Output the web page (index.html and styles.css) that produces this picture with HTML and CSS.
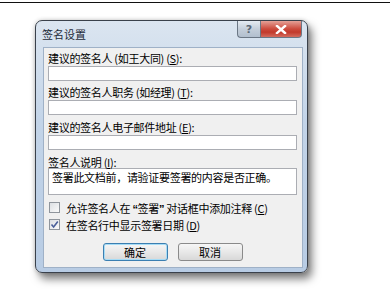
FILE: index.html
```html
<!DOCTYPE html>
<html lang="zh-CN">

<head>
    <meta charset="UTF-8">
    <meta name="viewport" content="width=device-width, initial-scale=1.0">
    <title>签名设置</title>
    <link rel="stylesheet" href="styles.css">
</head>

<body>
    <div class="top-rule"></div>

    <div class="dialog">
        <div class="title-bar">
            <span class="title">签名设置</span>
            <div class="title-buttons">
                <span class="btn-help">?</span>
                <span class="btn-close">
                    <svg width="12" height="9" viewBox="0 0 12 9">
                        <path d="M2 1 L10 8 M10 1 L2 8" stroke="#fff" stroke-width="2.4" stroke-linecap="square" />
                    </svg>
                </span>
            </div>
        </div>

        <div class="client">
            <div class="field">
                <label class="field-label">建议的签名人 (如王大同) (<u>S</u>):</label>
                <div class="input"></div>
            </div>
            <div class="field">
                <label class="field-label">建议的签名人职务 (如经理) (<u>T</u>):</label>
                <div class="input"></div>
            </div>
            <div class="field">
                <label class="field-label">建议的签名人电子邮件地址 (<u>E</u>):</label>
                <div class="input"></div>
            </div>
            <div class="field">
                <label class="field-label">签名人说明 (<u>I</u>):</label>
                <div class="textarea">签署此文档前，请验证要签署的内容是否正确。</div>
            </div>

            <div class="check-row first">
                <span class="checkbox"></span>
                <span>允许签名人在 <span class="quote">“</span>签署<span class="quote">”</span> 对话框中添加注释 (<u>C</u>)</span>
            </div>
            <div class="check-row">
                <span class="checkbox">
                    <svg width="9" height="9" viewBox="0 0 9 9">
                        <path d="M1.5 4.5 L3.6 7 L7.8 1.5" fill="none" stroke="#4a5f9a" stroke-width="1.6" />
                    </svg>
                </span>
                <span>在签名行中显示签署日期 (<u>D</u>)</span>
            </div>

            <div class="actions">
                <span class="button default">确定</span>
                <span class="button">取消</span>
            </div>
        </div>
    </div>
</body>

</html>
```

FILE: styles.css
```css
* {
    box-sizing: border-box;
    margin: 0;
    padding: 0;
}

body {
    font-family: 'Noto Sans CJK SC', 'Noto Sans', sans-serif;
    font-size: 11px;
    color: #000;
    background-color: #fff;
    width: 390px;
    height: 303px;
    overflow: hidden;
}

.top-rule {
    margin-top: 2px;
    height: 1px;
    background-color: #111;
}

.dialog {
    margin: 17px 0 0 35px;
    width: 273px;
    height: 253px;
    padding: 0 4px 4px 7px;
    border: 1px solid #3a414b;
    border-radius: 7px;
    background: linear-gradient(#dbe5f0, #c3d4e8 40%, #b8cce4);
    box-shadow: 4px 6px 8px rgba(0, 0, 0, 0.5), 0 0 4px rgba(0, 0, 0, 0.2);
}

.title-bar {
    display: flex;
    align-items: flex-start;
    height: 26px;
}

.title {
    margin: 5px 0 0 -1px;
    line-height: 16px;
    font-size: 11px;
    color: #1e2a38;
}

.title-buttons {
    display: flex;
    margin-left: auto;
    margin-right: 1px;
}

.btn-help,
.btn-close {
    display: flex;
    align-items: center;
    justify-content: center;
    height: 17px;
    border: 1px solid #6b7785;
    border-top: none;
}

.btn-help {
    width: 23px;
    border-radius: 0 0 0 4px;
    border-right: none;
    background: linear-gradient(#e5ebf2, #c4ceda 50%, #b2bfce);
    color: #5b6776;
    font-family: 'DejaVu Sans', sans-serif;
    font-size: 11px;
    font-weight: bold;
}

.btn-close {
    width: 42px;
    border-radius: 0 0 4px 0;
    background: linear-gradient(#e5a197, #cc4a3c 50%, #c23a2c 70%, #d46c5e);
}

.client {
    height: 221px;
    padding: 2px 5px 0 4px;
    border: 1px solid #9fb1c7;
    background-color: #f0f0f0;
    letter-spacing: -0.3px;
}

.field {
    margin-bottom: 3px;
}

.field + .field {
    margin-bottom: 4px;
}

.field-label {
    display: block;
    line-height: 16px;
}

.input {
    height: 15px;
    border: 1px solid #abadb3;
    background-color: #fff;
}

.textarea {
    height: 27px;
    margin-top: -2px;
    padding: 1px 3px;
    border: 1px solid #abadb3;
    background-color: #fff;
    line-height: 15px;
    white-space: nowrap;
}

.check-row {
    display: flex;
    align-items: center;
    gap: 6px;
    height: 17px;
    padding-left: 1px;
}

.check-row.first {
    margin-top: 4px;
}

.quote {
    font-family: 'Liberation Sans', sans-serif;
    font-weight: bold;
}

.checkbox {
    display: flex;
    align-items: center;
    justify-content: center;
    width: 11px;
    height: 11px;
    border: 1px solid #8f959c;
    background: linear-gradient(135deg, #dcdfe3, #fafafa);
}

.actions {
    display: flex;
    justify-content: center;
    gap: 10px;
    margin-top: 10px;
    letter-spacing: 0;
}

.button {
    display: flex;
    align-items: center;
    justify-content: center;
    width: 65px;
    height: 18px;
    border: 1px solid #8a8a8a;
    border-radius: 3px;
    background: linear-gradient(#f6f6f6, #e8e8e8 50%, #d8d8d8);
}

.button.default {
    border-color: #3c7fb1;
    box-shadow: inset 0 0 0 1px #a6dcf6;
}
```
